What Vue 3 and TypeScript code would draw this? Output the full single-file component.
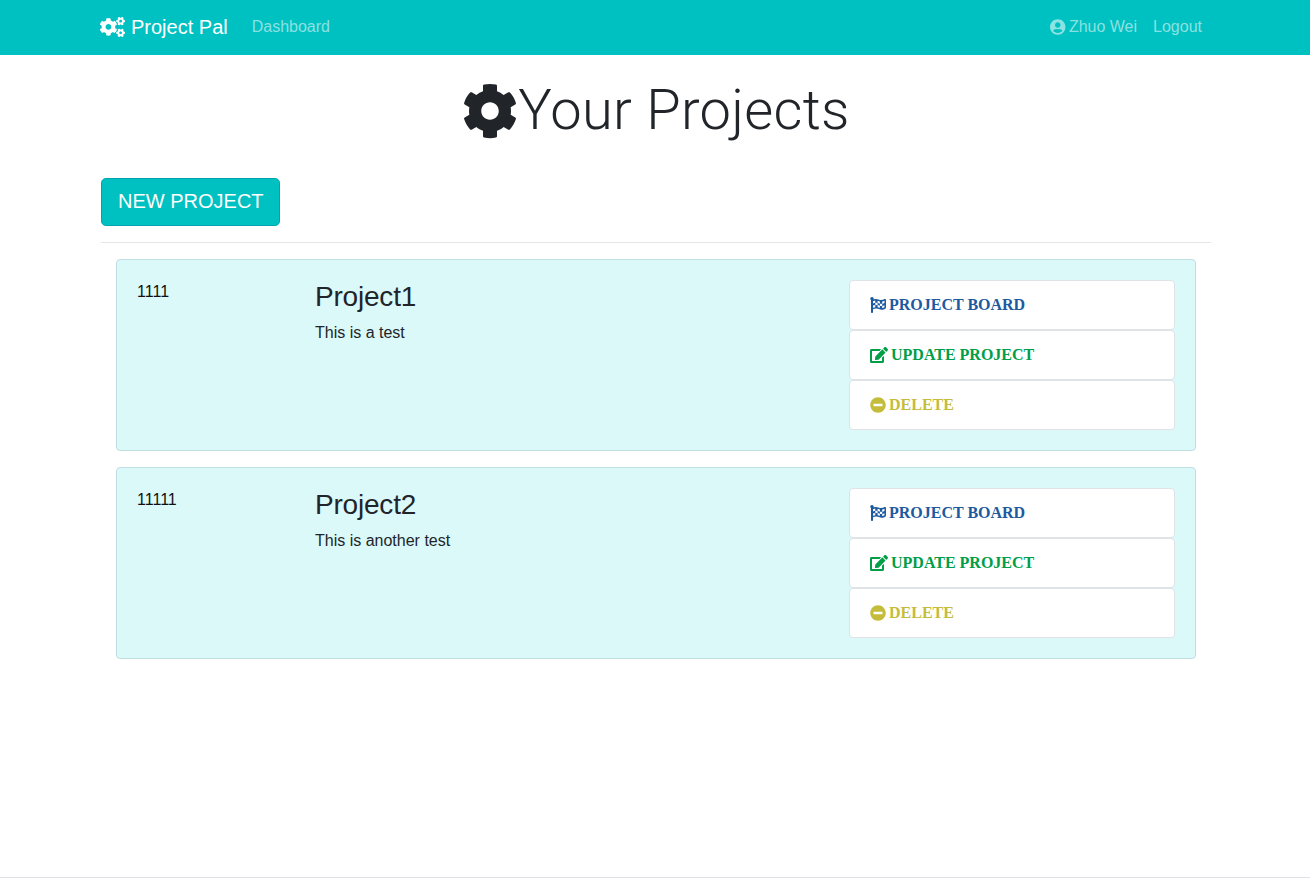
<script setup lang="ts">
interface Project {
  id: string
  name: string
  description: string
}

const projects: Project[] = [
  { id: '1111', name: 'Project1', description: 'This is a test' },
  { id: '11111', name: 'Project2', description: 'This is another test' },
]

const cogPath =
  'M487.4 315.7l-42.6-24.6c4.3-23.2 4.3-47 0-70.2l42.6-24.6c4.9-2.8 7.1-8.6 5.5-14-11.1-35.6-30-67.8-54.7-94.6-3.8-4.1-10-5.1-14.8-2.3L380.8 110c-17.9-15.4-38.5-27.3-60.8-35.1V25.8c0-5.6-3.9-10.5-9.4-11.7-36.7-8.2-74.3-7.8-109.2 0-5.5 1.2-9.4 6.1-9.4 11.7V75c-22.2 7.9-42.8 19.8-60.8 35.1L88.7 85.5c-4.9-2.8-11-1.9-14.8 2.3-24.7 26.7-43.6 58.9-54.7 94.6-1.7 5.4.6 11.2 5.5 14L67.3 221c-4.3 23.2-4.3 47 0 70.2l-42.6 24.6c-4.9 2.8-7.1 8.6-5.5 14 11.1 35.6 30 67.8 54.7 94.6 3.8 4.1 10 5.1 14.8 2.3l42.6-24.6c17.9 15.4 38.5 27.3 60.8 35.1v49.2c0 5.6 3.9 10.5 9.4 11.7 36.7 8.2 74.3 7.8 109.2 0 5.5-1.2 9.4-6.1 9.4-11.7v-49.2c22.2-7.9 42.8-19.8 60.8-35.1l42.6 24.6c4.9 2.8 11 1.9 14.8-2.3 24.7-26.7 43.6-58.9 54.7-94.6 1.5-5.5-.7-11.3-5.6-14.1zM256 336c-44.1 0-80-35.9-80-80s35.9-80 80-80 80 35.9 80 80-35.9 80-80 80z'
const cogsPath =
  'M512.1 191l-8.2 14.3c-3 5.3-9.4 7.5-15.1 5.4-11.8-4.4-22.6-10.7-32.1-18.6-4.6-3.8-5.8-10.5-2.8-15.7l8.2-14.3c-6.9-8-12.3-17.3-15.9-27.4h-16.5c-6 0-11.2-4.3-12.2-10.3-2-12-2.1-24.6 0-37.1 1-6 6.2-10.4 12.2-10.4h16.5c3.6-10.1 9-19.4 15.9-27.4l-8.2-14.3c-3-5.2-1.9-11.9 2.8-15.7 9.5-7.9 20.4-14.2 32.1-18.6 5.7-2.1 12.1.1 15.1 5.4l8.2 14.3c10.5-1.9 21.2-1.9 31.7 0L552 6.3c3-5.3 9.4-7.5 15.1-5.4 11.8 4.4 22.6 10.7 32.1 18.6 4.6 3.8 5.8 10.5 2.8 15.7l-8.2 14.3c6.9 8 12.3 17.3 15.9 27.4h16.5c6 0 11.2 4.3 12.2 10.3 2 12 2.1 24.6 0 37.1-1 6-6.2 10.4-12.2 10.4h-16.5c-3.6 10.1-9 19.4-15.9 27.4l8.2 14.3c3 5.2 1.9 11.9-2.8 15.7-9.5 7.9-20.4 14.2-32.1 18.6-5.7 2.1-12.1-.1-15.1-5.4l-8.2-14.3c-10.4 1.9-21.2 1.9-31.7 0zm-10.5-58.8c38.5 29.6 82.4-14.3 52.8-52.8-38.5-29.7-82.4 14.3-52.8 52.8zM386.3 286.1l33.7 16.8c10.1 5.8 14.5 18.1 10.5 29.1-8.9 24.2-26.4 46.4-42.6 65.8-7.4 8.9-20.2 11.1-30.3 5.3l-29.1-16.8c-16 13.7-34.6 24.6-54.9 31.7v33.6c0 11.6-8.3 21.6-19.7 23.6-24.6 4.2-50.4 4.4-75.9 0-11.5-2-20-11.9-20-23.6V418c-20.3-7.2-38.9-18-54.9-31.7L74 403c-10 5.8-22.9 3.6-30.3-5.3-16.2-19.4-33.3-41.6-42.2-65.7-4-10.9.4-23.2 10.5-29.1l33.3-16.8c-3.9-20.9-3.9-42.4 0-63.4L12 205.8c-10.1-5.8-14.6-18.1-10.5-29 8.9-24.2 26-46.4 42.2-65.8 7.4-8.9 20.2-11.1 30.3-5.3l29.1 16.8c16-13.7 34.6-24.6 54.9-31.7V57.1c0-11.5 8.2-21.5 19.6-23.5 24.6-4.2 50.5-4.4 76-.1 11.5 2 20 11.9 20 23.6v33.6c20.3 7.2 38.9 18 54.9 31.7l29.1-16.8c10-5.8 22.9-3.6 30.3 5.3 16.2 19.4 33.2 41.6 42.1 65.8 4 10.9.1 23.2-10 29.1l-33.7 16.8c3.9 21 3.9 42.5 0 63.5zm-117.6 21.1c59.2-77-28.7-164.9-105.7-105.7-59.2 77 28.7 164.9 105.7 105.7zm243.4 182.7l-8.2 14.3c-3 5.3-9.4 7.5-15.1 5.4-11.8-4.4-22.6-10.7-32.1-18.6-4.6-3.8-5.8-10.5-2.8-15.7l8.2-14.3c-6.9-8-12.3-17.3-15.9-27.4h-16.5c-6 0-11.2-4.3-12.2-10.3-2-12-2.1-24.6 0-37.1 1-6 6.2-10.4 12.2-10.4h16.5c3.6-10.1 9-19.4 15.9-27.4l-8.2-14.3c-3-5.2-1.9-11.9 2.8-15.7 9.5-7.9 20.4-14.2 32.1-18.6 5.7-2.1 12.1.1 15.1 5.4l8.2 14.3c10.5-1.9 21.2-1.9 31.7 0l8.2-14.3c3-5.3 9.4-7.5 15.1-5.4 11.8 4.4 22.6 10.7 32.1 18.6 4.6 3.8 5.8 10.5 2.8 15.7l-8.2 14.3c6.9 8 12.3 17.3 15.9 27.4h16.5c6 0 11.2 4.3 12.2 10.3 2 12 2.1 24.6 0 37.1-1 6-6.2 10.4-12.2 10.4h-16.5c-3.6 10.1-9 19.4-15.9 27.4l8.2 14.3c3 5.2 1.9 11.9-2.8 15.7-9.5 7.9-20.4 14.2-32.1 18.6-5.7 2.1-12.1-.1-15.1-5.4l-8.2-14.3c-10.4 1.9-21.2 1.9-31.7 0zM501.6 431c38.5 29.6 82.4-14.3 52.8-52.8-38.5-29.6-82.4 14.3-52.8 52.8z'
const userPath =
  'M248 8C111 8 0 119 0 256s111 248 248 248 248-111 248-248S385 8 248 8zm0 96c48.6 0 88 39.4 88 88s-39.4 88-88 88-88-39.4-88-88 39.4-88 88-88zm0 344c-58.7 0-111.3-26.6-146.5-68.2 18.8-35.4 55.6-59.8 98.5-59.8 2.4 0 4.8.4 7.1 1.1 13 4.2 26.6 6.9 40.9 6.9 14.3 0 28-2.7 40.9-6.9 2.3-.7 4.7-1.1 7.1-1.1 42.9 0 79.7 24.4 98.5 59.8C359.3 421.4 306.7 448 248 448z'

const actions = [
  {
    label: 'PROJECT BOARD',
    tone: 'action--board',
    viewBox: '0 0 512 512',
    width: 16,
    path: 'M243.2 189.9V258c26.1 5.9 49.3 15.6 73.6 22.3v-68.2c-26-5.8-49.4-15.5-73.6-22.2zm223.3-123c-34.3 15.9-76.5 31.9-117 31.9C296.2 98.8 251.7 64 184.3 64c-25 0-47.3 4.4-68 12 2.8-7.3 4.1-15.2 3.6-23.6C118.1 24 94.8 1.2 66.3 0 34.3-1.3 8 24.3 8 56c0 19 9.5 35.8 24 45.9V488c0 13.3 10.7 24 24 24h16c13.3 0 24-10.7 24-24v-94.4c28.3-12.1 63.6-22.1 114.4-22.1 53.6 0 97.8 34.8 165.2 34.8 48.2 0 86.7-16.3 122.5-40.9 8.7-6 13.8-15.8 13.8-26.4V95.9c.1-23.3-24.2-38.8-45.4-29zM169.6 325.5c-25.8 2.7-50 8.7-73.6 16.6v-70.5c26.2-9.3 47.5-15 73.6-17.4zM464 191c-23.6 9.8-46.3 19.5-73.6 23.9V286c24.8-3.4 51.4-11.8 73.6-26v70.5c-25.1 16.1-48.5 24.7-73.6 27.1V286c-27 3.7-47.9 1.5-73.6-5.6v67.4c-23.9-7.4-47.3-16.7-73.6-21.3V258c-19.7-4.4-40.8-6.8-73.6-3.8v-70c-22.4 3.1-44.6 10.2-73.6 20.9v-70.5c33.2-12.2 50.1-19.8 73.6-22v71.6c27-3.7 48.4-1.3 73.6 5.7v-67.4c23.7 7.4 47.2 16.7 73.6 21.3v68.4c23.7 5.3 47.6 6.9 73.6 2.7V143c27-4.8 52.3-13.6 73.6-22.5z',
  },
  {
    label: 'UPDATE PROJECT',
    tone: 'action--update',
    viewBox: '0 0 576 512',
    width: 18,
    path: 'M402.6 83.2l90.2 90.2c3.8 3.8 3.8 10 0 13.8L274.4 405.6l-92.8 10.3c-12.4 1.4-22.9-9.1-21.5-21.5l10.3-92.8L388.8 83.2c3.8-3.8 10-3.8 13.8 0zm162-22.9l-48.8-48.8c-15.2-15.2-39.9-15.2-55.2 0l-35.4 35.4c-3.8 3.8-3.8 10 0 13.8l90.2 90.2c3.8 3.8 10 3.8 13.8 0l35.4-35.4c15.2-15.3 15.2-40 0-55.2zM384 346.2V448H64V128h229.8c3.2 0 6.2-1.3 8.5-3.5l40-40c7.6-7.6 2.2-20.5-8.5-20.5H48C21.5 64 0 85.5 0 112v352c0 26.5 21.5 48 48 48h352c26.5 0 48-21.5 48-48V306.2c0-10.7-12.9-16-20.5-8.5l-40 40c-2.2 2.3-3.5 5.3-3.5 8.5z',
  },
  {
    label: 'DELETE',
    tone: 'action--delete',
    viewBox: '0 0 512 512',
    width: 16,
    path: 'M256 8C119 8 8 119 8 256s111 248 248 248 248-111 248-248S393 8 256 8zM124 296c-6.6 0-12-5.4-12-12v-56c0-6.6 5.4-12 12-12h264c6.6 0 12 5.4 12 12v56c0 6.6-5.4 12-12 12H124z',
  },
]
</script>

<template>
  <div class="page">
    <nav class="navbar">
      <div class="navbar__inner">
        <a class="brand">
          <svg class="brand__icon" viewBox="0 0 640 512"><path :d="cogsPath" /></svg>
          Project Pal
        </a>
        <a class="nav-link">Dashboard</a>
        <div class="navbar__right">
          <a class="nav-link">
            <svg class="nav-link__icon" viewBox="0 0 496 512"><path :d="userPath" /></svg>
            Zhuo Wei
          </a>
          <a class="nav-link">Logout</a>
        </div>
      </div>
    </nav>

    <main class="container">
      <h1 class="title">
        <svg class="title__icon" viewBox="0 0 512 512"><path :d="cogPath" /></svg>Your Projects
      </h1>

      <a class="btn-new">NEW PROJECT</a>
      <hr class="divider" />

      <div class="project-list">
        <section v-for="project in projects" :key="project.id" class="card">
          <div class="card__id">{{ project.id }}</div>
          <div class="card__main">
            <h3 class="card__name">{{ project.name }}</h3>
            <p class="card__desc">{{ project.description }}</p>
          </div>
          <ul class="actions">
            <li v-for="action in actions" :key="action.label" class="action" :class="action.tone">
              <svg class="action__icon" :viewBox="action.viewBox" :width="action.width" height="16">
                <path :d="action.path" />
              </svg>
              {{ action.label }}
            </li>
          </ul>
        </section>
      </div>
    </main>
    <div class="page-end"></div>
  </div>
</template>

<style>
html,
body {
  margin: 0;
  background: #fff;
}
</style>

<style scoped>
.page {
  height: 878px;
  display: flex;
  flex-direction: column;
  font-family: "Liberation Sans", Arial, sans-serif;
  font-size: 16px;
  line-height: 1.5;
  color: #212529;
  box-sizing: border-box;
  overflow: hidden;
}

.navbar {
  background: #00c1c1;
  height: 55px;
  flex-shrink: 0;
}

.navbar__inner {
  box-sizing: border-box;
  width: 1110px;
  margin: 0 auto;
  height: 100%;
  padding-bottom: 2px;
  display: flex;
  align-items: center;
}

.brand {
  display: flex;
  align-items: center;
  color: #fff;
  font-size: 20px;
  margin-right: 16px;
  white-space: nowrap;
}

.brand__icon {
  width: 25px;
  height: 20px;
  fill: #fff;
  margin-right: 6px;
}

.nav-link {
  display: flex;
  align-items: center;
  padding: 0 8px;
  color: rgba(255, 255, 255, 0.55);
  white-space: nowrap;
}

.nav-link__icon {
  width: 15.5px;
  height: 16px;
  fill: rgba(255, 255, 255, 0.55);
  margin-right: 3px;
}

.navbar__right {
  margin-left: auto;
  display: flex;
}

.container {
  width: 1110px;
  margin-left: 101px;
  flex: 1;
}

.title {
  margin: 22px 0 34px;
  display: flex;
  justify-content: center;
  align-items: center;
  font-family: Roboto, "Liberation Sans", sans-serif;
  font-size: 56px;
  font-weight: 300;
  letter-spacing: 0.3px;
  line-height: 1.2;
}

.title__icon {
  width: 56px;
  height: 56px;
  fill: #212529;
}

.btn-new {
  display: inline-block;
  box-sizing: border-box;
  height: 48px;
  padding: 0 15px 0 16px;
  line-height: 44px;
  font-size: 20px;
  color: #fff;
  background: #00c1c1;
  border: 1px solid #00a3ae;
  border-radius: 4.8px;
}

.divider {
  margin: 16px 0 16px;
  border: 0;
  border-top: 1px solid #e2e6e8;
}

.project-list {
  padding: 0 15px;
  display: flex;
  flex-direction: column;
  gap: 16px;
}

.card {
  display: grid;
  grid-template-columns: 178px 534px 1fr;
  box-sizing: border-box;
  height: 192px;
  padding: 20px;
  background: #dbf9f9;
  border: 1px solid #bfdfe2;
  border-radius: 4px;
}

.card__id {
  color: #111;
  line-height: 24px;
}

.card__main {
  padding-right: 15px;
}

.card__name {
  margin: 0 0 7px;
  font-size: 28px;
  font-weight: 400;
  letter-spacing: -0.2px;
  line-height: 1.2;
}

.card__desc {
  margin: 0;
}

.actions {
  list-style: none;
  margin: 0;
  padding: 0;
}

.action {
  display: flex;
  align-items: center;
  box-sizing: border-box;
  height: 50px;
  padding: 0 20px;
  background: #fff;
  border: 1px solid #dfe3e5;
  border-radius: 4px;
  font-family: "Liberation Serif", "Times New Roman", serif;
  font-weight: 700;
  white-space: nowrap;
}

.action__icon {
  fill: currentColor;
  margin-right: 3px;
}

.action--board {
  color: #1d5a9f;
}

.action--update {
  color: #009e47;
}

.action--delete {
  color: #c4bc3a;
}

.page-end {
  height: 1px;
  background: #dee2e6;
  flex-shrink: 0;
}
</style>
